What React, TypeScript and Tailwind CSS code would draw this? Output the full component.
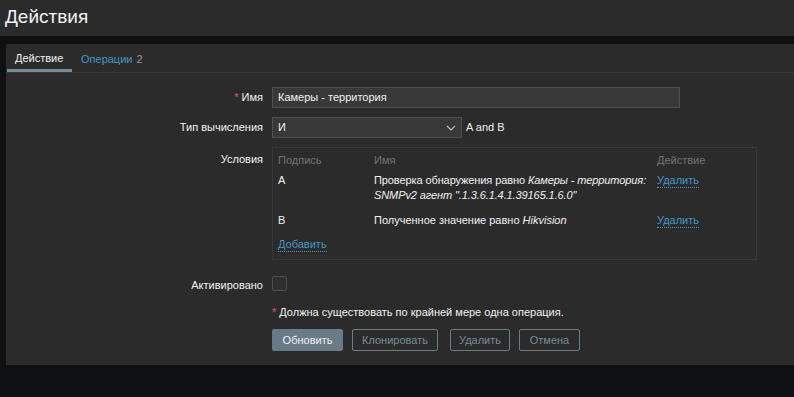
import React from "react";

const font = { fontFamily: '"Liberation Sans", Arial, sans-serif' };

function Link({ children }: { children: React.ReactNode }) {
  return (
    <span className="text-[#4796c4] border-b border-dotted border-[#4796c4] leading-[13px] inline-block">
      {children}
    </span>
  );
}

export default function App() {
  return (
    <div className="min-h-[397px] bg-[#0e1012] text-[#f2f2f2] text-[11px]" style={font}>
      <div className="h-[36px] bg-[#2b2b2b] pl-[5px] flex items-center">
        <h1 className="text-[19px] leading-none -mt-[3px]">Действия</h1>
      </div>
      <div className="h-[8px]" />
      <div className="ml-[6px] bg-[#2b2b2b] h-[321px]">
        <div className="flex h-[29px] border-b border-[#383838] pl-[1px]">
          <div className="w-[65px] pl-[8px] flex items-center border-b-[3px] border-[#768d99] pt-[3px] text-[#f2f2f2]">
            Действие
          </div>
          <div className="pl-[9px] flex items-center pt-[3px]">
            <span className="text-[#4796c4]">Операции</span>
            <span className="text-[#9a9a9a] ml-[4px]">2</span>
          </div>
        </div>

        <div className="grid grid-cols-[257px_1fr] gap-x-[9px] pt-[14px]">
          <div className="flex items-center justify-end h-[21px]">
            <span className="text-[#e45959] mr-[3px]">*</span>Имя
          </div>
          <div className="h-[21px] w-[408px] bg-[#383838] border border-[#4f4f4f] flex items-center px-[5px]">
            Камеры - территория
          </div>

          <div className="flex items-center justify-end h-[21px] mt-[9px]">Тип вычисления</div>
          <div className="flex items-center mt-[9px]">
            <div className="h-[21px] w-[190px] bg-[#383838] border border-[#4f4f4f] flex items-center justify-between pl-[5px] pr-[5px]">
              <span>И</span>
              <svg width="10" height="6" viewBox="0 0 10 6" fill="none">
                <path d="M1 1l4 4 4-4" stroke="#bdbdbd" strokeWidth="1.2" />
              </svg>
            </div>
            <span className="ml-[4px]">A and B</span>
          </div>

          <div className="flex justify-end mt-[9px] pt-[4px]">Условия</div>
          <div className="mt-[9px] w-[485px] h-[113px] border border-[#383838] pl-[5px] pt-[5px]">
            <div className="grid grid-cols-[96px_283px_1fr] leading-[15px]">
              <div className="text-[#737373]">Подпись</div>
              <div className="text-[#737373]">Имя</div>
              <div className="text-[#737373]">Действие</div>

              <div className="mt-[5px]">A</div>
              <div className="mt-[5px] pr-[6px] tracking-[-0.1px]">
                Проверка обнаружения равно <i>Камеры - территория: SNMPv2 агент ".1.3.6.1.4.1.39165.1.6.0"</i>
              </div>
              <div className="mt-[5px]"><Link>Удалить</Link></div>

              <div className="mt-[10px]">B</div>
              <div className="mt-[10px]">
                Полученное значение равно <i>Hikvision</i>
              </div>
              <div className="mt-[10px]"><Link>Удалить</Link></div>
            </div>
            <div className="mt-[9px] leading-[15px]"><Link>Добавить</Link></div>
          </div>

          <div className="flex items-center justify-end mt-[18px] h-[15px]">Активировано</div>
          <div className="mt-[16px]">
            <div className="w-[15px] h-[15px] border border-[#4f4f4f] bg-[#2f2f2f] rounded-[2px]" />
          </div>

          <div className="mt-[12px]" />
          <div className="mt-[12px] flex items-center h-[15px]">
            <span className="text-[#e45959] mr-[3px]">*</span>Должна существовать по крайней мере одна операция.
          </div>

          <div className="mt-[9px]" />
          <div className="mt-[9px] flex gap-[9px]">
            <button className="h-[22px] w-[71px] bg-[#687b87] rounded-[2px] text-[#f2f2f2] text-[11px]" style={font}>
              Обновить
            </button>
            <button className="h-[22px] w-[86px] border border-[#6a7e8a] rounded-[2px] text-[#768d99] text-[11px]" style={font}>
              Клонировать
            </button>
            <button className="h-[22px] w-[60px] border border-[#6a7e8a] rounded-[2px] text-[#768d99] text-[11px] ml-[3px]" style={font}>
              Удалить
            </button>
            <button className="h-[22px] w-[61px] border border-[#6a7e8a] rounded-[2px] text-[#768d99] text-[11px]" style={font}>
              Отмена
            </button>
          </div>
        </div>
      </div>
    </div>
  );
}
